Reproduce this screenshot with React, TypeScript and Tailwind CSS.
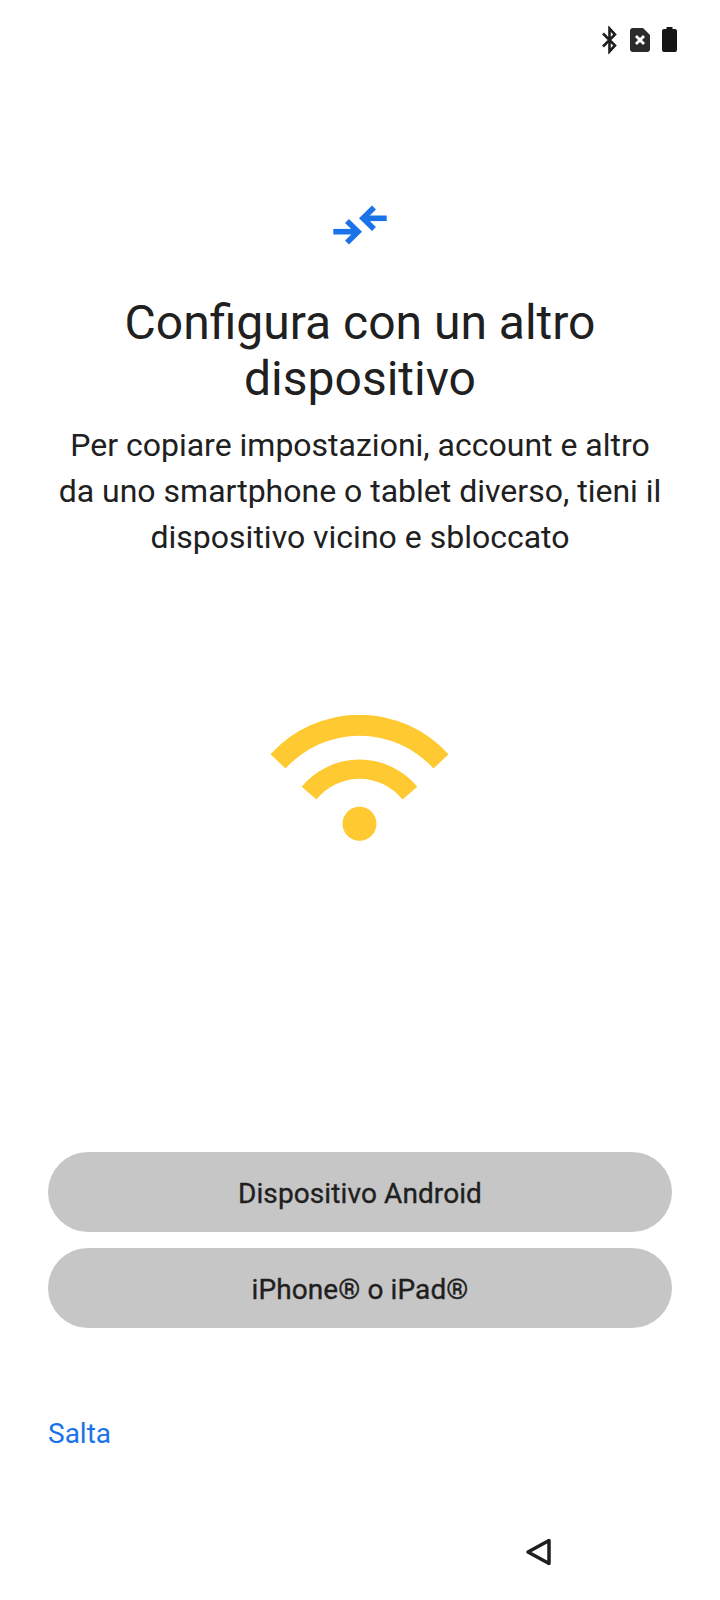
export default function App() {
  return (
    <div className="flex h-[1600px] w-[720px] flex-col bg-white text-[#1f1f1f] [font-family:Roboto,sans-serif]">
      {/* status bar */}
      <div className="flex h-[80px] items-center justify-end pr-[42px]">
        <svg width="78" height="28" viewBox="0 0 78 28" className="block">
          <path d="M3 7.500 L15 19.500 L9.500 25.500 L9.500 2.500 L15 8.500 L3 20.500" fill="none" stroke="#1f1f1f" strokeWidth="2.600" />
          <path d="M33 2h10l7 7v14a3 3 0 0 1-3 3H33a3 3 0 0 1-3-3V5a3 3 0 0 1 3-3z" fill="#2b2b2b" />
          <path d="M36 10l8 8M44 10l-8 8" stroke="#fff" strokeWidth="2.800" />
          <path d="M64 3h2.500V1h6v2H75a2 2 0 0 1 2 2v19a2 2 0 0 1-2 2H64a2 2 0 0 1-2-2V5a2 2 0 0 1 2-2z" fill="#161616" />
        </svg>
      </div>

      {/* top icon */}
      <div className="mt-[122px] flex justify-center">
        <svg width="60" height="44" viewBox="0 0 60 44" className="block">
          <g fill="none" stroke="#1a73e8" strokeWidth="5.600">
            <path d="M3.300 29.700H28" />
            <path d="M17 19L28 29.700L17 40.500" />
            <path d="M56.700 16.300H33" />
            <path d="M44 5.500L33 16.300L44 27" />
          </g>
        </svg>
      </div>

      {/* heading */}
      <h1 className="mt-[49px] px-[48px] text-center text-[48px] leading-[56px] font-normal text-[#202020]">
        Configura con un altro dispositivo
      </h1>
      <p className="mt-[15px] px-[56px] text-center text-[32px] leading-[46px] font-normal text-[#202020]">
        Per copiare impostazioni, account e altro da uno smartphone o tablet diverso, tieni il dispositivo vicino e sbloccato
      </p>

      {/* wifi illustration */}
      <div className="mt-[155px] flex justify-center">
        <svg width="180" height="128" viewBox="0.500 0 180 128" className="block">
          <g fill="#fec931">
            <path d="M1 39.300A120 120 0 0 1 179 39.300L164 53.500A100 100 0 0 0 16 53.500Z" />
            <path d="M32.200 71.700A75 75 0 0 1 147.800 71.700L133 84.500A55 55 0 0 0 47 84.500Z" />
            <circle cx="90" cy="108.700" r="17" />
          </g>
        </svg>
      </div>

      {/* buttons */}
      <div className="mt-[309px] flex flex-col gap-4 px-[48px]">
        <button className="h-[80px] rounded-full bg-[#c6c6c6] pt-[3px] text-[28px] font-normal tracking-[0.1px] text-[#1f1f1f] [-webkit-text-stroke:0.35px_#1f1f1f]">Dispositivo Android</button>
        <button className="h-[80px] rounded-full bg-[#c6c6c6] pt-[3px] text-[28px] font-normal tracking-[0.1px] text-[#1f1f1f] [-webkit-text-stroke:0.35px_#1f1f1f]">iPhone® o iPad®</button>
      </div>

      <div className="mt-[88px] pl-[48px] text-[28px] leading-[36px] text-[#1a73e8]">Salta</div>

      {/* nav bar */}
      <div className="mt-[85px] flex pl-[525px]">
        <svg width="28" height="30" viewBox="0 0 28 30" className="block">
          <path d="M3 15 L24 3.500 V26.500 Z" fill="none" stroke="#1f1f1f" strokeWidth="3.500" strokeLinejoin="round" />
        </svg>
      </div>
    </div>
  );
}
